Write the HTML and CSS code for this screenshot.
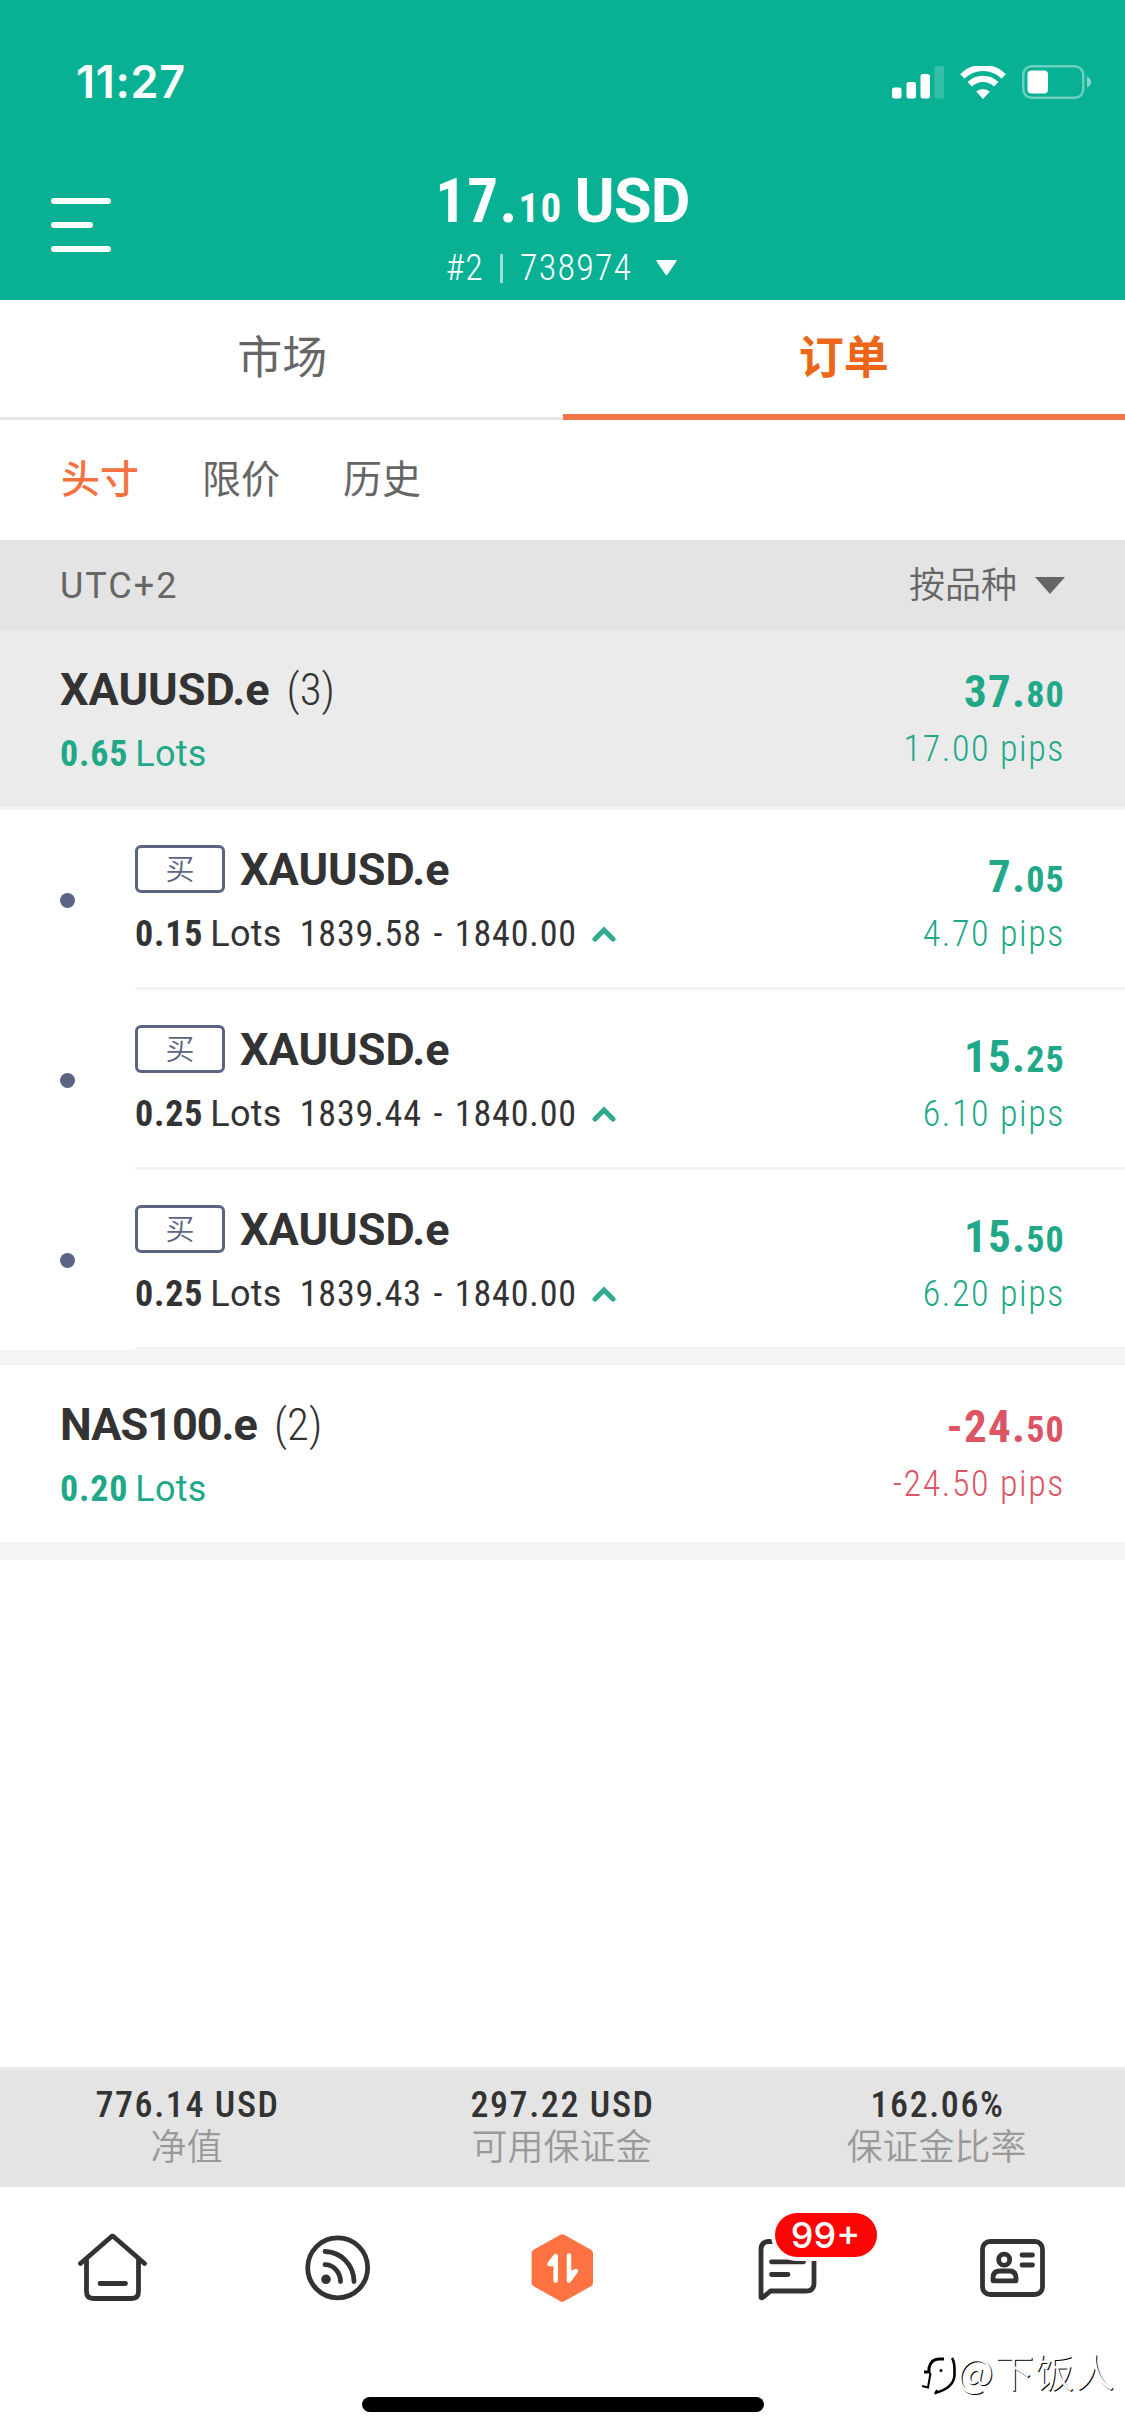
FILE: index.html
```
<!DOCTYPE html>
<html lang="zh-CN">
<head>
<meta charset="utf-8">
<title>订单</title>
<link rel="stylesheet" href="styles.css">
</head>
<body>
<div class="app">
  <header class="header">
    <div class="status">
      <span class="status-time">11:27</span>
      <div class="status-icons">
        <svg width="52" height="33" viewBox="0 0 52 33" fill="#fff">
          <rect x="0" y="21.5" width="9.5" height="11" rx="2.5"/>
          <rect x="14.5" y="16" width="9.5" height="16.5" rx="2.5"/>
          <rect x="28.5" y="8" width="9.5" height="24.500" rx="2.5"/>
          <rect x="42.500" y="0" width="9.5" height="32.500" rx="2.5" opacity=".18"/>
        </svg>
        <svg width="46" height="33" viewBox="0 0 46 33" fill="none" stroke="#fff" stroke-width="6.200">
          <path d="M2.300 10.400A29.500 29.500 0 0 1 43.700 10.400"/>
          <path d="M9.800 18.300A18.600 18.600 0 0 1 36.200 18.300"/>
          <path d="M23 33L16.200 25.600Q23 20.400 29.800 25.600Z" fill="#fff" stroke="none"/>
        </svg>
        <svg width="70" height="34" viewBox="0 0 70 34">
          <rect x="1.250" y="1.250" width="60" height="31.500" rx="8.500" fill="none" stroke="#fff" stroke-opacity=".4" stroke-width="2.500"/>
          <rect x="5.500" y="5.500" width="20.500" height="23" rx="4" fill="#fff"/>
          <path d="M65 11.500Q69 13.500 69 17T65 22.500Z" fill="#fff" opacity=".5"/>
        </svg>
      </div>
    </div>
    <div class="account">
      <svg class="menu" width="60" height="54" viewBox="0 0 60 54" stroke="#fff" stroke-width="6" stroke-linecap="round">
        <path d="M3 3H57M3 27H39M3 51H57"/>
      </svg>
      <div class="account-info">
        <div class="balance">17.<small>10</small><span class="currency">USD</span></div>
        <div class="account-id">
          <span>#2</span><i class="divider"></i><span>738974</span>
          <svg width="21" height="16" viewBox="0 0 21 16" fill="#fff"><path d="M1.500 0H19.500Q21.500 0 20 2L11.500 14.500Q10.500 16 9.500 14.500L1 2Q-.5 0 1.500 0Z"/></svg>
        </div>
      </div>
    </div>
  </header>

  <nav class="tabs">
    <div class="tab">市场</div>
    <div class="tab tab-active">订单</div>
  </nav>
  <nav class="subtabs">
    <span class="subtab-active">头寸</span><span>限价</span><span>历史</span>
  </nav>
  <div class="sortbar">
    <span class="timezone">UTC+2</span>
    <span class="sort">按品种
      <svg width="30" height="17" viewBox="0 0 30 17" fill="#666"><path d="M0 0H30L15 17Z"/></svg>
    </span>
  </div>

  <main class="orders">
    <section class="group">
      <div class="summary summary-open">
        <div class="left">
          <div class="symbol">XAUUSD.e<span class="count">(3)</span></div>
          <div class="detail up"><b>0.65</b><span class="lots">Lots</span></div>
        </div>
        <div class="right up">
          <div class="profit">37.<small>80</small></div>
          <div class="pips">17.00 pips</div>
        </div>
      </div>
      <div class="order">
        <i class="dot"></i>
        <div class="order-body">
          <div class="left">
            <div class="symbol"><span class="side">买</span>XAUUSD.e</div>
            <div class="detail"><b>0.15</b><span class="lots">Lots</span><span class="price">1839.58 - 1840.00</span><svg class="trend" width="24" height="16" viewBox="0 0 24 16"><path d="M3 13L12 4L21 13"/></svg></div>
          </div>
          <div class="right up">
            <div class="profit">7.<small>05</small></div>
            <div class="pips">4.70 pips</div>
          </div>
        </div>
      </div>
      <div class="order">
        <i class="dot"></i>
        <div class="order-body">
          <div class="left">
            <div class="symbol"><span class="side">买</span>XAUUSD.e</div>
            <div class="detail"><b>0.25</b><span class="lots">Lots</span><span class="price">1839.44 - 1840.00</span><svg class="trend" width="24" height="16" viewBox="0 0 24 16"><path d="M3 13L12 4L21 13"/></svg></div>
          </div>
          <div class="right up">
            <div class="profit">15.<small>25</small></div>
            <div class="pips">6.10 pips</div>
          </div>
        </div>
      </div>
      <div class="order">
        <i class="dot"></i>
        <div class="order-body">
          <div class="left">
            <div class="symbol"><span class="side">买</span>XAUUSD.e</div>
            <div class="detail"><b>0.25</b><span class="lots">Lots</span><span class="price">1839.43 - 1840.00</span><svg class="trend" width="24" height="16" viewBox="0 0 24 16"><path d="M3 13L12 4L21 13"/></svg></div>
          </div>
          <div class="right up">
            <div class="profit">15.<small>50</small></div>
            <div class="pips">6.20 pips</div>
          </div>
        </div>
      </div>
    </section>
    <section class="group">
      <div class="summary">
        <div class="left">
          <div class="symbol symbol-tight">NAS100.e<span class="count">(2)</span></div>
          <div class="detail up"><b>0.20</b><span class="lots">Lots</span></div>
        </div>
        <div class="right down">
          <div class="profit">-24.<small>50</small></div>
          <div class="pips">-24.50 pips</div>
        </div>
      </div>
    </section>
  </main>

  <div class="totals">
    <div class="total"><div class="total-value">776.14 USD</div><div class="total-label">净值</div></div>
    <div class="total"><div class="total-value">297.22 USD</div><div class="total-label">可用保证金</div></div>
    <div class="total"><div class="total-value">162.06%</div><div class="total-label">保证金比率</div></div>
  </div>

  <nav class="tabbar">
    <div class="tabbar-item">
      <svg class="icon" viewBox="0 0 72 72"><path d="M3.500 31.500L34 5Q35.500 3.700 37 5L67.500 31.500M9.500 27V59.500Q9.500 66.500 16.500 66.500H54.500Q61.500 66.500 61.500 59.500V27M23 51.500H48.500"/></svg>
    </div>
    <div class="tabbar-item">
      <svg class="icon" viewBox="0 0 72 72"><circle cx="35.700" cy="35.800" r="30"/><path d="M23 19.500A29.500 30.500 0 0 1 52 49.500M23 32.700A15.500 17 0 0 1 38.500 49.500"/><circle cx="24" cy="47.300" r="4.800" fill="#333" stroke="none"/></svg>
    </div>
    <div class="tabbar-item">
      <svg class="icon" viewBox="0 0 72 72"><path d="M35.300 6.200L62 21.200V50.800L35.300 65.800L8.600 50.800V21.200Z" fill="#ff7342" stroke="#ff7342" stroke-width="8"/><path d="M28.700 48.500V24L22.500 32H28.700M42 23.500V48.500L49 39L42 42" stroke="#fff" fill="#fff" stroke-width="4.500"/></svg>
    </div>
    <div class="tabbar-item">
      <div class="badge-anchor">
        <svg class="icon" viewBox="0 0 72 72"><path d="M9 65.500V17.500Q9 9.500 17 9.500H54Q62 9.500 62 17.500V51Q62 59 54 59H18.500L11.500 65Q9 67 9 64.500M19.500 29.800H51.500M19.500 42.500H36"/></svg>
        <span class="badge">99+</span>
      </div>
    </div>
    <div class="tabbar-item">
      <svg class="icon" viewBox="0 0 72 72"><rect x="5.500" y="9.500" width="60" height="53" rx="7.500"/><circle cx="27.200" cy="27.700" r="5.500"/><path d="M16 48.800V46Q16 39 23 39H32Q39 39 39 46V48.800ZM45 23H55.500M45 33H55.500"/></svg>
    </div>
  </nav>
  <div class="home-indicator"></div>

  <div class="watermark">
    <svg width="38" height="50" viewBox="0 -4 38 50" fill="none" stroke="#000">
      <path d="M5 20H10V16Q12 7 20 7H25" stroke-width="3"/>
      <path d="M33 6Q36 10 35.500 23T16 41" stroke-width="2.600"/>
      <path d="M11.500 21L9 35.500L3 34M16 42L18 38" stroke-width="2"/>
      <circle cx="22" cy="18.500" r="1.500" fill="#000" stroke="none"/>
    </svg>
    <span>@下饭人</span>
  </div>
</div>
</body>
</html>
```
FILE: styles.css
```
* { box-sizing: border-box; }

body {
  margin: 0;
  background: #fff;
  color: #333;
  font-family: Roboto, "Noto Sans CJK SC", sans-serif;
  font-size: 36px;
}

svg { display: block; flex: none; }
small { font-size: 36px; line-height: 1; }

.app {
  position: relative;
  display: flex;
  flex-direction: column;
  width: 1125px;
  height: 2436px;
  overflow: hidden;
}

/* Header */
.header { height: 300px; background: #09b194; color: #fff; }
.status {
  display: flex;
  align-items: center;
  justify-content: space-between;
  height: 164px;
  padding: 0 33px 0 76px;
}
.status-time { font: 600 45px/60px Inter, sans-serif; letter-spacing: .7px; }
.status-icons { display: flex; align-items: center; gap: 16px; }
.account {
  display: grid;
  grid-template-columns: 1fr auto 1fr;
  height: 136px;
  padding: 1px 51px 0;
}
.menu { margin-top: 33px; }
.account-info { display: flex; flex-direction: column; align-items: center; }
.balance {
  font-weight: 700;
  font-size: 61px;
  line-height: 72px;
  font-stretch: 85%;
  letter-spacing: 1.300px;
}
.balance small { font-size: 41px; }
.currency { margin-left: 12px; font-stretch: 100%; letter-spacing: -.7px; }
.account-id {
  display: flex;
  align-items: center;
  padding-right: 2px;
  font-weight: 300;
  line-height: 62px;
  font-stretch: 85%;
  letter-spacing: 1.200px;
}
.divider { width: 3px; height: 29px; margin: 0 17px 0 16px; background: rgba(255, 255, 255, .6); }
.account-id svg { margin-left: 24px; }

/* Tabs */
.tabs { display: flex; height: 120px; }
.tab {
  width: 50%;
  display: flex;
  align-items: center;
  justify-content: center;
  padding-left: 2px;
  border-bottom: 3px solid #e4e4e4;
  color: #666;
  font-size: 45px;
  line-height: 60px;
}
.tab-active {
  padding: 3px 0 0;
  border-bottom: 6px solid #f27548;
  color: #ec6619;
  font-weight: 700;
}
.subtabs {
  display: flex;
  align-items: center;
  gap: 63px;
  height: 120px;
  padding-left: 61px;
  color: #666;
  font-size: 39px;
  line-height: 60px;
}
.subtab-active { color: #f5713f; font-weight: 500; }
.sortbar {
  display: flex;
  align-items: center;
  justify-content: space-between;
  height: 90px;
  padding: 1px 60px 0;
  background: #e4e4e4;
  color: #666;
  line-height: 48px;
}
.timezone { letter-spacing: 2px; }
.sort { display: flex; align-items: center; gap: 18px; font-weight: 350; }

/* Orders */
.orders { flex: 1; }
.group { border-bottom: 15px solid #f4f4f4; }
.summary, .order-body {
  display: flex;
  justify-content: space-between;
  height: 180px;
  padding-right: 60px;
  border-bottom: 3px solid #f4f4f4;
}
.summary { padding-left: 60px; }
.summary-open { background: #ebebeb; }
.order { display: flex; align-items: center; }
.dot {
  width: 15px;
  height: 15px;
  margin: 0 60px;
  border-radius: 50%;
  background: #5b6583;
}
.order-body { flex: 1; }
.left { padding-top: 30px; }
.symbol {
  display: flex;
  align-items: center;
  font-weight: 700;
  font-size: 45px;
  line-height: 60px;
}
.symbol-tight { letter-spacing: -1px; }
.count { margin-left: 17px; font-weight: 300; font-stretch: 80%; letter-spacing: 0; }
.side {
  width: 90px;
  height: 48px;
  margin: -3px 15px 0 0;
  border: 3px solid #5b6583;
  border-radius: 6px;
  color: #5b6583;
  font-weight: 350;
  font-size: 29px;
  line-height: 44px;
  text-align: center;
}
.detail {
  display: flex;
  align-items: center;
  margin-top: 10px;
  line-height: 48px;
}
.detail b { font-stretch: 85%; letter-spacing: .8px; }
.lots { margin-left: 7px; letter-spacing: .3px; }
.price {
  margin-left: 18px;
  font-stretch: 85%;
  letter-spacing: .850px;
  word-spacing: 2.500px;
}
.trend { margin-left: 15px; fill: none; stroke: #2faa8c; stroke-width: 5px; stroke-linecap: round; }
.right { padding-top: 32px; text-align: right; }
.order .right { padding-top: 37px; }
.profit {
  font-weight: 700;
  font-size: 45px;
  line-height: 60px;
  font-stretch: 85%;
  letter-spacing: 1.200px;
}
.pips {
  margin-top: 3px;
  font-weight: 300;
  line-height: 49px;
  font-stretch: 85%;
  letter-spacing: 1.600px;
}
.up { color: #21a888; }
.down { color: #dc5565; }

/* Account totals */
.totals {
  display: flex;
  height: 120px;
  padding-top: 14px;
  border-top: 3px solid #ebebeb;
  background: #e4e4e4;
  text-align: center;
}
.total { flex: 1; }
.total-value {
  font-weight: 500;
  line-height: 42px;
  font-stretch: 85%;
  letter-spacing: 1.600px;
}
.total-label { margin: 1px 2px 0 0; color: #999; font-weight: 350; line-height: 42px; }

/* Bottom navigation */
.tabbar { display: flex; height: 210px; padding-top: 45px; }
.tabbar-item { flex: 1; display: flex; justify-content: center; align-items: flex-start; }
.icon {
  width: 72px;
  height: 72px;
  fill: none;
  stroke: #333;
  stroke-width: 4.800px;
  stroke-linecap: round;
  stroke-linejoin: round;
}
.badge-anchor { position: relative; }
.badge {
  position: absolute;
  left: 23px;
  top: -19px;
  width: 102px;
  height: 44px;
  border-radius: 22px;
  background: #fb0505;
  box-shadow: 0 0 0 4px #fff;
  color: #fff;
  font: 500 36px/44px Inter, sans-serif;
  text-align: center;
}
.home-indicator {
  width: 402px;
  height: 15px;
  margin: 0 auto 24px;
  border-radius: 8px;
  background: #000;
}
.watermark {
  position: absolute;
  left: 919px;
  top: 2348px;
  display: flex;
  color: #fff;
  font: 350 39px/44px "Noto Sans CJK SC", sans-serif;
  letter-spacing: 1.300px;
  text-shadow: 1px 1px 0 #000;
}
```
